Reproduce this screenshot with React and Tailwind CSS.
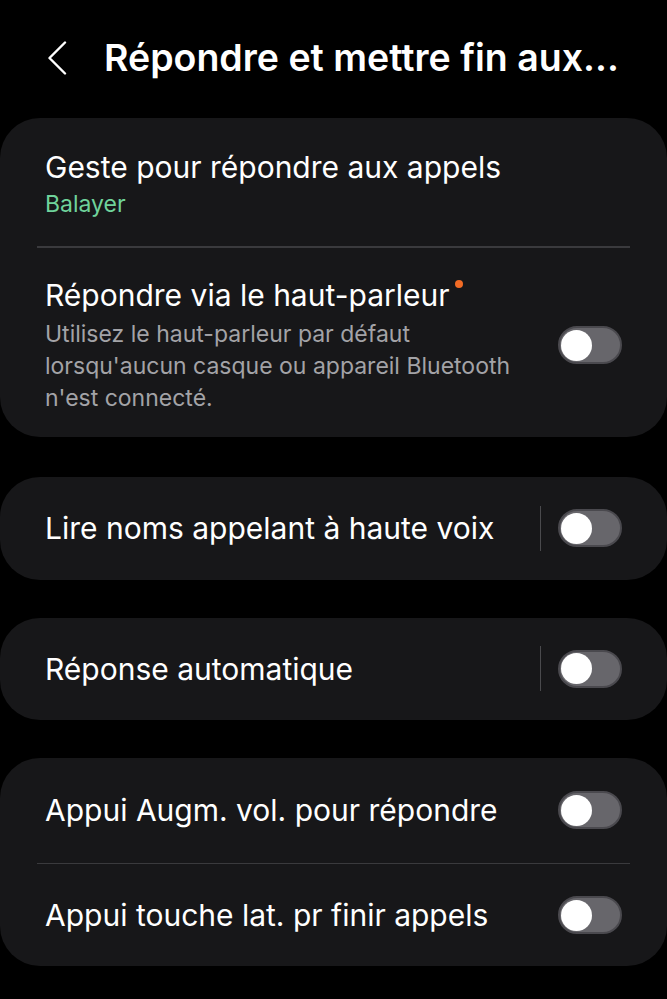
import React from "react";

function Toggle() {
  return (
    <div className="w-[64px] h-[38px] rounded-full bg-[#67666b] border-[2px] border-[#4a494e] flex items-center pl-[1px] shrink-0">
      <div className="w-[31px] h-[31px] rounded-full bg-white" />
    </div>
  );
}

function VSep() {
  return <div className="w-[1px] h-[45px] bg-[#4a4a4d] mr-[17px] shrink-0" />;
}

export default function App() {
  const font = { fontFamily: "Inter, Roboto, 'Noto Sans', sans-serif" };
  return (
    <div className="w-[667px] h-[999px] bg-black text-white overflow-hidden" style={font}>
      {/* Header */}
      <div className="h-[118px] flex items-center pl-[47px] pb-[2px]">
        <svg width="20" height="34" viewBox="0 0 20 34" className="shrink-0">
          <path d="M18 1.5 L2.5 17 L18 32.5" fill="none" stroke="white" strokeWidth="2.4" strokeLinecap="round" strokeLinejoin="round" />
        </svg>
        <div className="ml-[37px] text-[37.5px] font-semibold leading-[44px] whitespace-nowrap">
          Répondre et mettre fin aux...
        </div>
      </div>

      {/* Card 1 */}
      <div className="bg-[#171719] rounded-[40px] mx-0">
        <div className="px-[45px] pt-[31px] pb-[27px]">
          <div className="text-[30px] leading-[36px]">Geste pour répondre aux appels</div>
          <div className="text-[23px] leading-[30px] mt-[4px] text-[#6fd39b]">Balayer</div>
        </div>
        <div className="mx-[37px] h-[1.5px] bg-[#3a3a3d]" />
        <div className="pl-[45px] pr-[45px] pt-[29px] pb-[23px] flex items-center">
          <div className="flex-1">
            <div className="text-[30px] leading-[36px] relative inline-block">
              Répondre via le haut-parleur
              <span className="absolute right-[-13px] top-[3px] w-[8px] h-[8px] rounded-full bg-[#f26b25]" />
            </div>
            <div className="text-[23px] leading-[32px] mt-[5px] text-[#a3a3a7] whitespace-nowrap">
              Utilisez le haut-parleur par défaut
              <br />
              lorsqu'aucun casque ou appareil Bluetooth
              <br />
              n'est connecté.
            </div>
          </div>
          <Toggle />
        </div>
      </div>

      {/* Card 2 */}
      <div className="bg-[#171719] rounded-[40px] mt-[40px] h-[103px] pl-[45px] pr-[45px] flex items-center">
        <div className="flex-1 text-[30px] leading-[36px]">Lire noms appelant à haute voix</div>
        <VSep />
        <Toggle />
      </div>

      {/* Card 3 */}
      <div className="bg-[#171719] rounded-[40px] mt-[38px] h-[102px] pl-[45px] pr-[45px] flex items-center">
        <div className="flex-1 text-[30px] leading-[36px]">Réponse automatique</div>
        <VSep />
        <Toggle />
      </div>

      {/* Card 4 */}
      <div className="bg-[#171719] rounded-[40px] mt-[38px]">
        <div className="h-[105px] pl-[45px] pr-[45px] flex items-center">
          <div className="flex-1 text-[30px] leading-[36px]">Appui Augm. vol. pour répondre</div>
          <Toggle />
        </div>
        <div className="mx-[37px] h-[1.5px] bg-[#3a3a3d]" />
        <div className="h-[102px] pl-[45px] pr-[45px] flex items-center">
          <div className="flex-1 text-[30px] leading-[36px]">Appui touche lat. pr finir appels</div>
          <Toggle />
        </div>
      </div>
    </div>
  );
}
